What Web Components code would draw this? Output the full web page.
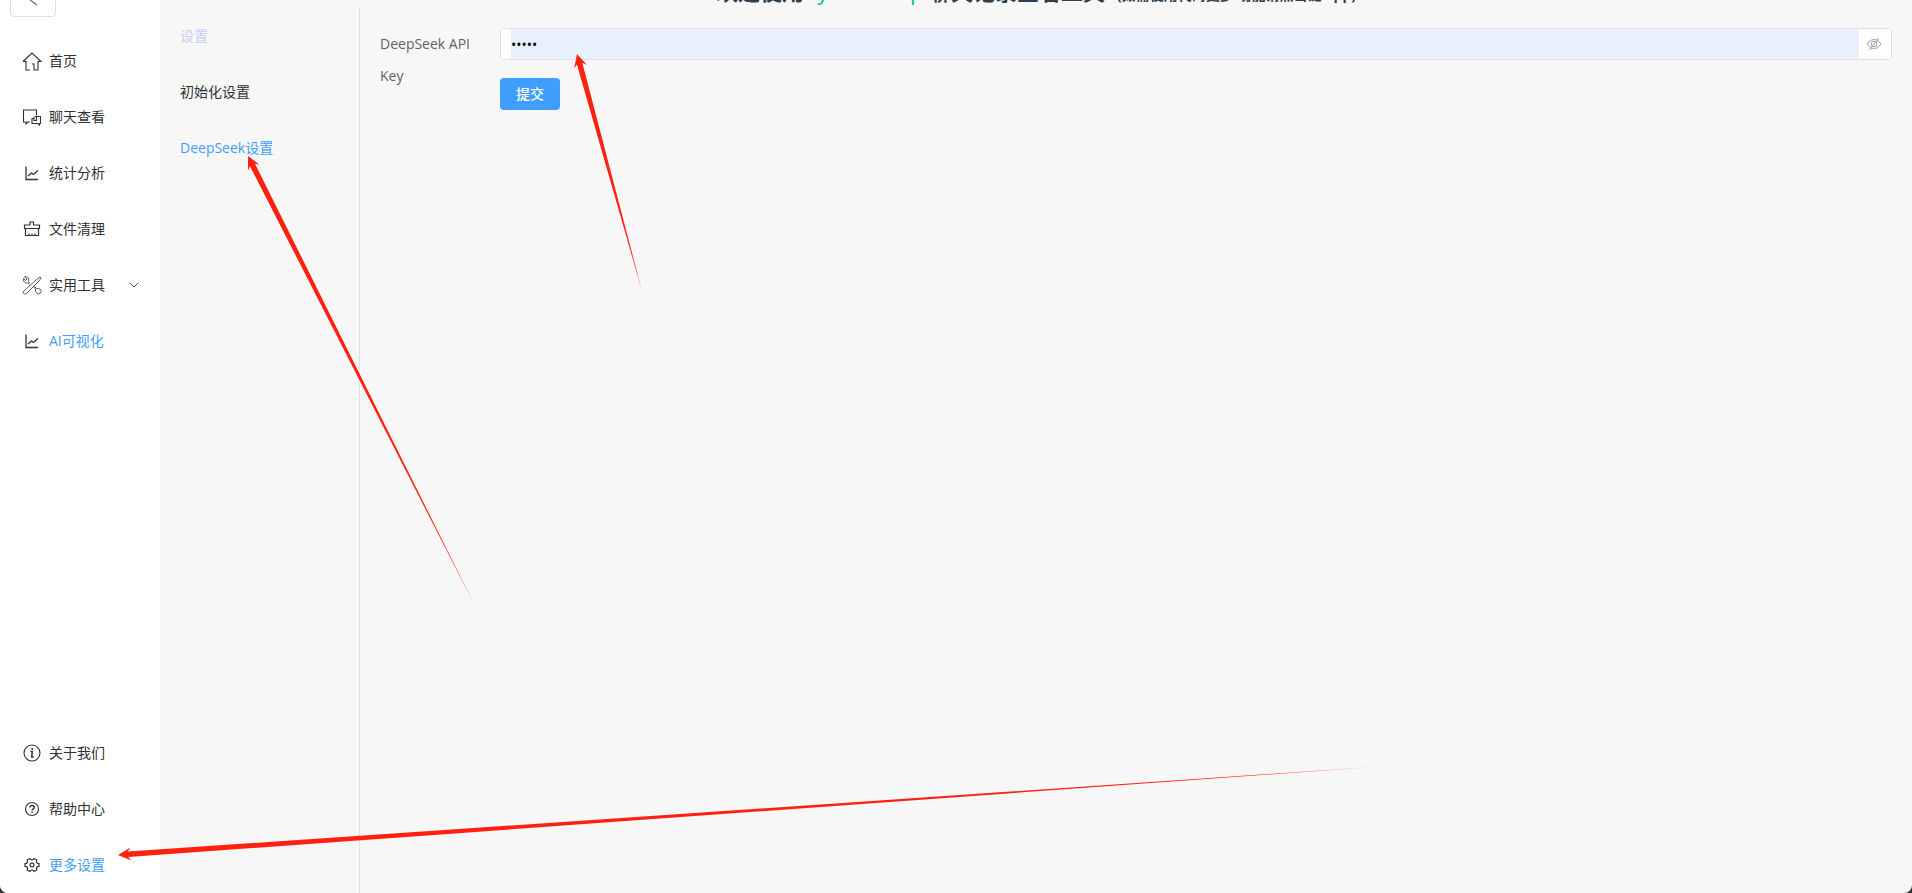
<!DOCTYPE html>
<html lang="zh-CN">
<head>
<meta charset="utf-8">
<title>PyWxDump</title>
<style>
html,body{margin:0;height:100%}
body{background:#303133;font:14px/20px "Open Sans","Noto Sans CJK SC",sans-serif;color:#303133;overflow:hidden}
</style>
</head>
<body>
<app-shell>
  <side-bar slot="side"></side-bar>
  <page-title slot="title"></page-title>
  <settings-menu slot="menu"></settings-menu>
  <key-form slot="content"></key-form>
</app-shell>
<arrow-layer></arrow-layer>
<script>
const define = (name, html) => customElements.define(name, class extends HTMLElement {
  constructor() {
    super();
    const t = document.createElement('template');
    t.innerHTML = html;
    this.attachShadow({mode: 'open'}).append(t.content.cloneNode(true));
  }
});

define('app-shell', `<style>
:host{display:flex;height:100vh;background:#f7f7f7;border-radius:0 0 8px 8px;overflow:hidden}
.main{flex:1;min-width:0;display:flex;flex-direction:column}
.body{flex:1;display:flex;min-height:0}
.content{flex:1;min-width:0;padding:20px}
</style>
<slot name="side"></slot>
<div class="main"><slot name="title"></slot>
<div class="body"><slot name="menu"></slot><main class="content"><slot name="content"></slot></main></div></div>`);

define('page-title', `<style>
:host{display:flex;height:8px;overflow:hidden;justify-content:center;align-items:flex-end}
h2{margin:0;font-size:22px;line-height:26px;color:#2c3e50;white-space:nowrap;font-weight:700}
a{color:#00bd7e;text-decoration:none;font-weight:400}
small{font-size:14px}
</style>
<h2>欢迎使用<a href="#">PyWxDump</a> 聊天记录查看工具! <small>(如需使用代码更多 功能请点击链 app)</small></h2>`);

const icons = {
  home: '<path d="M3 12.500 12 4l9 8.500h-3V21h-4v-6h-2M3 12.500h3V21h4"/>',
  chat: '<path d="M10 17H8l-2 2v-2H3.500V5h13v5M15 11.500h5.500v7h-1v1.500L18 18.500h-6v-5h2M16.500 10.500v5H14v-4"/>',
  chart: '<path d="M6 5.500V18.500h12M8 15l3.500-3 2 1.500L18 9.500" stroke-width="1.300"/>',
  clean: '<path d="M4.500 11.500V8H10V5h3.500v3h6v3.500zM5.500 11.500v7h13v-7M9 18.500v-2M12 18.500v-2M15 18.500v-2" stroke-width="1.200"/>',
  tool: '<g stroke-width=".8"><path d="m4 18 13-12 3-2 1 1-2 3L7 20q-2 2-3.500.5T4 18zM9.500 10 8.500 8.500q1-3-1-4.500Q6 3 4.500 4l2.500 2-1.500 1.500L3.500 5.500Q3 9 5.500 10l2.500 0 1.500 1.500M13.500 14l2 2q-.500 3 1.500 4.500 2 1 3.500-.5t0-3.500q-2-1.500-4-1l-2-2"/></g>',
  info: '<circle cx="12" cy="12" r="8"/><path d="M10.500 10.500H12.300L11.700 16h2M12.200 7v1.800" stroke-width="1.500"/>',
  help: '<circle cx="12" cy="12" r="6.500"/><path d="M10 10.500c0-3 4.300-2.500 4.300 0 0 1.500-2.200 1.300-2.200 3M12.100 14.500v1.400" stroke-width="1.400"/>',
  gear: '<path d="M9.800 5.500q.700 1.300 2.200 1.300t2.200-1.300l2.600 1.500q-.800 1.300 0 2.600t2.200 1.100v2.600q-1.500-.200-2.200 1.100t0 2.600l-2.600 1.500q-.700-1.300-2.200-1.300t-2.200 1.300L7.200 17q.800-1.300 0-2.600T5 13.300v-2.600q1.500.200 2.200-1.100T7.200 7z" stroke-width="1.200"/><circle cx="12" cy="12" r="1.900" stroke-width="1.200"/>'
};

customElements.define('nav-item', class extends HTMLElement {
  constructor() {
    super();
    const arrow = this.hasAttribute('more')
      ? '<svg class="more" viewBox="0 0 12 12"><path d="m2 4 4 4 4-4"/></svg>' : '';
    this.attachShadow({mode: 'open'}).innerHTML = `<style>
:host{display:block}
a{display:flex;align-items:center;height:56px;padding:0 16px 0 20px;gap:5px;color:#303133;text-decoration:none}
:host([active]) a{color:#409eff}
svg{width:24px;height:24px;fill:none;stroke:#303133;stroke-width:1.1}
svg.more{width:12px;height:12px;margin-left:auto;margin-right:4px;stroke-width:.9}
</style><a href="#"><svg viewBox="0 0 24 24" aria-hidden="true">${icons[this.getAttribute('icon')]}</svg><slot></slot>${arrow}</a>`;
  }
});

define('side-bar', `<style>
:host{display:flex;flex-direction:column;width:160px;background:#fff}
.top{height:17px;margin-bottom:16px;padding-left:10px;display:flex;align-items:flex-end;overflow:hidden}
button{width:46px;height:32px;flex:none;border:1px solid #dcdfe6;border-radius:4px;background:#fff;padding:0;display:flex;align-items:center;justify-content:center}
svg{width:14px;height:14px;fill:none;stroke:#606266;stroke-width:1.1}
nav{display:block}
.low{margin-top:auto}
</style>
<div class="top"><button type="button" aria-label="收起"><svg viewBox="0 0 14 14"><path d="M10 0 3 5l8 6"/></svg></button></div>
<nav><nav-item icon="home">首页</nav-item><nav-item icon="chat">聊天查看</nav-item><nav-item icon="chart">统计分析</nav-item><nav-item icon="clean">文件清理</nav-item><nav-item icon="tool" more>实用工具</nav-item><nav-item icon="chart" active>AI可视化</nav-item></nav>
<nav class="low"><nav-item icon="info">关于我们</nav-item><nav-item icon="help">帮助中心</nav-item><nav-item icon="gear" active>更多设置</nav-item></nav>`);

define('settings-menu', `<style>
:host{display:block;box-sizing:border-box;width:200px;border-right:1px solid #dcdfe6}
a,span{display:flex;align-items:center;height:56px;padding-left:20px;color:#303133;text-decoration:none}
span{color:#c6d1f5}
.on{color:#409eff}
</style><nav><span>设置</span><a href="#">初始化设置</a><a href="#" class="on">DeepSeek设置</a></nav>`);

define('key-form', `<style>
:host{display:block}
form{display:grid;grid-template-columns:108px 1fr;column-gap:12px;align-items:start}
label{line-height:32px;color:#606266}
.fields{display:flex;flex-direction:column;gap:18px;align-items:flex-start}
.box{box-sizing:border-box;display:flex;width:100%;height:32px;border:1px solid #dcdfe6;border-radius:4px;background:#fff;padding-left:10px;overflow:hidden}
input{flex:1;min-width:0;border:0;padding:0;outline:0;background:#e8f0fe;color:#000;font:14px "Open Sans",sans-serif}
.eye{width:32px;border:0;padding:0 2px 0 0;background:none;display:flex;align-items:center;justify-content:center}
svg{width:16px;height:16px;fill:none;stroke:#a8abb2;stroke-width:.9}
.send{width:60px;height:32px;border:0;border-radius:4px;background:#409eff;color:#fff;font:500 14px "Open Sans","Noto Sans CJK SC",sans-serif;padding:0 0 2px}
</style>
<form onsubmit="return false"><label for="key">DeepSeek API Key</label>
<div class="fields"><div class="box"><input id="key" type="password" value="12345"><button class="eye" type="button" aria-label="显示"><svg viewBox="0 0 14 14"><path d="M1 7q2.500-4 6-4t6 4q-2.500 4-6 4T1 7zM3 12 11 2"/><circle cx="7" cy="7" r="2.300"/></svg></button></div>
<button class="send" type="submit">提交</button></div></form>`);

customElements.define('arrow-layer', class extends HTMLElement {
  constructor() {
    super();
    const arrows = [[577, 54, 642, 291], [248, 156, 474, 604], [118, 855, 1372, 767]];
    const shapes = arrows.map(([x, y, u, v]) => {
      const len = Math.hypot(u - x, v - y), deg = Math.atan2(v - y, u - x) * 180 / Math.PI;
      return `<path transform="translate(${x} ${y}) rotate(${deg})" d="M0 0 13-6.500 10-2.800 ${len} 0 10 2.800 13 6.500z"/>`;
    }).join('');
    this.attachShadow({mode: 'open'}).innerHTML = `<style>
:host{position:absolute;inset:0;pointer-events:none}
svg{width:100%;height:100%;display:block;fill:#ff2010}
</style><svg aria-hidden="true">${shapes}</svg>`;
  }
});
</script>
</body>
</html>
